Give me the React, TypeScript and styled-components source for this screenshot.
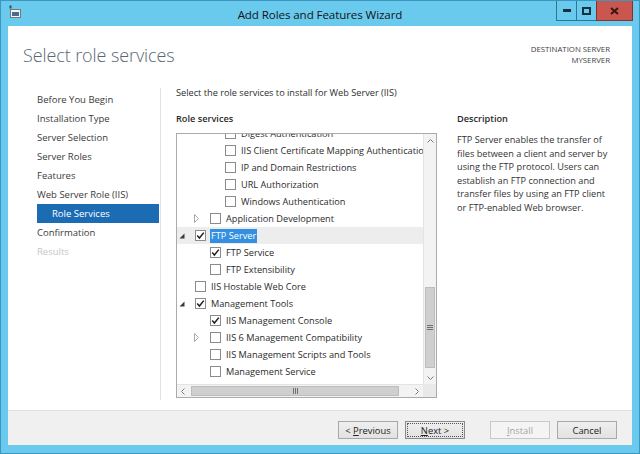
import styled, { createGlobalStyle } from "styled-components";

const GlobalStyle = createGlobalStyle`
    html, body {
        margin: 0;
        padding: 0;
    }
    body {
        font-family: "Open Sans", "Noto Sans", sans-serif;
        color: #2b2b2b;
    }
`;

type Expander = "none" | "open" | "closed";

interface TreeItem {
    label: string;
    level: number;
    checked?: boolean;
    expander?: Expander;
    selected?: boolean;
}

const navItems = [
    { label: "Before You Begin" },
    { label: "Installation Type" },
    { label: "Server Selection" },
    { label: "Server Roles" },
    { label: "Features" },
    { label: "Web Server Role (IIS)" },
    { label: "Role Services", active: true, sub: true },
    { label: "Confirmation" },
    { label: "Results", disabled: true },
];

const treeItems: TreeItem[] = [
    { label: "Digest Authentication", level: 3 },
    { label: "IIS Client Certificate Mapping Authentication", level: 3 },
    { label: "IP and Domain Restrictions", level: 3 },
    { label: "URL Authorization", level: 3 },
    { label: "Windows Authentication", level: 3 },
    { label: "Application Development", level: 2, expander: "closed" },
    { label: "FTP Server", level: 1, expander: "open", checked: true, selected: true },
    { label: "FTP Service", level: 2, checked: true },
    { label: "FTP Extensibility", level: 2 },
    { label: "IIS Hostable Web Core", level: 1 },
    { label: "Management Tools", level: 1, expander: "open", checked: true },
    { label: "IIS Management Console", level: 2, checked: true },
    { label: "IIS 6 Management Compatibility", level: 2, expander: "closed" },
    { label: "IIS Management Scripts and Tools", level: 2 },
    { label: "Management Service", level: 2 },
];

const App = () => {
    return (
        <>
            <GlobalStyle />
            <Window>
                <TitleBar>
                    <AppIcon width="12" height="14" viewBox="0 0 12 14">
                        <rect x="0.5" y="0.5" width="2" height="3" fill="#3b4a5a" />
                        <rect x="1.5" y="4.5" width="10" height="8" fill="#f4f4f4" stroke="#6c7a86" />
                        <rect x="3" y="7" width="7" height="4" fill="#4a6c8c" />
                    </AppIcon>
                    <Title>Add Roles and Features Wizard</Title>
                    <Controls>
                        <CtrlButton>
                            <svg width="8" height="3" viewBox="0 0 8 3">
                                <rect width="8" height="3" fill="#17323f" />
                            </svg>
                        </CtrlButton>
                        <CtrlButton>
                            <svg width="9" height="8" viewBox="0 0 9 8">
                                <rect x="1" y="1" width="7" height="6" fill="none" stroke="#17323f" strokeWidth="2" />
                            </svg>
                        </CtrlButton>
                        <CloseButton>
                            <svg width="9" height="8" viewBox="0 0 9 8">
                                <path d="M1 1 L8 7 M8 1 L1 7" stroke="#3a1512" strokeWidth="2" />
                            </svg>
                        </CloseButton>
                    </Controls>
                </TitleBar>

                <Client>
                    <Header>
                        <Heading>Select role services</Heading>
                        <Destination>
                            <div>DESTINATION SERVER</div>
                            <div>MYSERVER</div>
                        </Destination>
                    </Header>

                    <Body>
                        <Nav>
                            {navItems.map((item) => (
                                <NavItem
                                    key={item.label}
                                    $active={item.active}
                                    $sub={item.sub}
                                    $disabled={item.disabled}
                                >
                                    {item.label}
                                </NavItem>
                            ))}
                        </Nav>

                        <Main>
                            <Intro>Select the role services to install for Web Server (IIS)</Intro>
                            <Columns>
                                <TreeColumn>
                                    <SectionLabel>Role services</SectionLabel>
                                    <TreeBox>
                                        <TreeViewport>
                                            <TreeList>
                                                {treeItems.map((item) => (
                                                    <TreeRow
                                                        key={item.label}
                                                        $level={item.level}
                                                        $hover={item.selected}
                                                    >
                                                        <ExpanderSlot>
                                                            {item.expander === "open" && (
                                                                <svg width="6" height="6" viewBox="0 0 6 6">
                                                                    <polygon points="5.5,0.5 5.5,5.5 0.5,5.5" fill="#3a3a3a" />
                                                                </svg>
                                                            )}
                                                            {item.expander === "closed" && (
                                                                <svg width="6" height="9" viewBox="0 0 6 9">
                                                                    <polygon points="0.5,0.5 4.5,4.5 0.5,8.5" fill="none" stroke="#a8a8a8" />
                                                                </svg>
                                                            )}
                                                        </ExpanderSlot>
                                                        <CheckBox>
                                                            {item.checked && (
                                                                <svg width="9" height="9" viewBox="0 0 9 9">
                                                                    <path d="M1.2 4.6 L3.4 7 L7.8 1.6" fill="none" stroke="#1f1f1f" strokeWidth="1.5" />
                                                                </svg>
                                                            )}
                                                        </CheckBox>
                                                        <RowText $selected={item.selected}>{item.label}</RowText>
                                                    </TreeRow>
                                                ))}
                                            </TreeList>
                                        </TreeViewport>

                                        <VScroll>
                                            <ArrowCell>
                                                <svg width="7" height="4" viewBox="0 0 7 4">
                                                    <polyline points="0.5,3.5 3.5,0.5 6.5,3.5" fill="none" stroke="#7a7a7a" />
                                                </svg>
                                            </ArrowCell>
                                            <VTrack>
                                                <VThumb $offset={140}>
                                                    <svg width="6" height="5" viewBox="0 0 6 5">
                                                        <path d="M0 0.5 H6 M0 2.5 H6 M0 4.5 H6" stroke="#6f6f6f" />
                                                    </svg>
                                                </VThumb>
                                            </VTrack>
                                            <ArrowCell>
                                                <svg width="7" height="4" viewBox="0 0 7 4">
                                                    <polyline points="0.5,0.5 3.5,3.5 6.5,0.5" fill="none" stroke="#7a7a7a" />
                                                </svg>
                                            </ArrowCell>
                                        </VScroll>

                                        <HScroll>
                                            <ArrowCell>
                                                <svg width="4" height="7" viewBox="0 0 4 7">
                                                    <polyline points="3.5,0.5 0.5,3.5 3.5,6.5" fill="none" stroke="#7a7a7a" />
                                                </svg>
                                            </ArrowCell>
                                            <HTrack>
                                                <HThumb>
                                                    <svg width="5" height="6" viewBox="0 0 5 6">
                                                        <path d="M0.5 0 V6 M2.5 0 V6 M4.5 0 V6" stroke="#6f6f6f" />
                                                    </svg>
                                                </HThumb>
                                            </HTrack>
                                            <ArrowCell>
                                                <svg width="4" height="7" viewBox="0 0 4 7">
                                                    <polyline points="0.5,0.5 3.5,3.5 0.5,6.5" fill="none" stroke="#7a7a7a" />
                                                </svg>
                                            </ArrowCell>
                                        </HScroll>
                                        <Corner />
                                    </TreeBox>
                                </TreeColumn>

                                <DescColumn>
                                    <SectionLabel>Description</SectionLabel>
                                    <DescText>
                                        FTP Server enables the transfer of files between a client and server by
                                        using the FTP protocol. Users can establish an FTP connection and
                                        transfer files by using an FTP client or FTP-enabled Web browser.
                                    </DescText>
                                </DescColumn>
                            </Columns>
                        </Main>
                    </Body>

                    <Footer>
                        <Button>
                            <span>
                                &lt; <u>P</u>revious
                            </span>
                        </Button>
                        <Button $focused>
                            <FocusRing>
                                <span>
                                    <u>N</u>ext &gt;
                                </span>
                            </FocusRing>
                        </Button>
                        <Button $disabled $gap={25}>
                            <span>
                                <u>I</u>nstall
                            </span>
                        </Button>
                        <Button>Cancel</Button>
                    </Footer>
                </Client>
            </Window>
        </>
    );
};

const Window = styled.div`
    width: 640px;
    height: 454px;
    box-sizing: border-box;
    background: #6acaee;
    border: 1px solid #3b97c0;
    padding: 0 7px 8px 7px;
    display: flex;
    flex-direction: column;
`;

const TitleBar = styled.div`
    height: 25px;
    flex-shrink: 0;
    display: grid;
    grid-template-columns: 1fr auto 1fr;
    align-items: center;
`;

const AppIcon = styled.svg`
    justify-self: start;
    margin-left: 1px;
    margin-top: -3px;
`;

const Title = styled.div`
    font-size: 11.6px;
    color: #141414;
    letter-spacing: -0.1px;
    padding-top: 1px;
`;

const Controls = styled.div`
    justify-self: end;
    align-self: start;
    display: flex;
    margin-right: -1px;
`;

const CtrlButton = styled.div`
    width: 21px;
    height: 20px;
    box-sizing: border-box;
    border: 1px solid #2f7594;
    border-top: none;
    margin-left: -1px;
    display: flex;
    align-items: center;
    justify-content: center;
    background: #6acaee;
`;

const CloseButton = styled(CtrlButton)`
    width: 37px;
    background: #c9574f;
    border-color: #8a2f2a;
`;

const Client = styled.div`
    flex: 1;
    background: #ffffff;
    display: flex;
    flex-direction: column;
    min-height: 0;
`;

const Header = styled.div`
    height: 60px;
    flex-shrink: 0;
    display: flex;
    justify-content: space-between;
    padding: 0 22px 0 15px;
`;

const Heading = styled.h1`
    margin: 0;
    padding-top: 17px;
    font-size: 18px;
    line-height: 24px;
    font-weight: 300;
    color: #5a6773;
    letter-spacing: -0.1px;
`;

const Destination = styled.div`
    padding-top: 18px;
    text-align: right;
    font-size: 7.8px;
    line-height: 11px;
    color: #3e3e3e;
`;

const Body = styled.div`
    flex: 1;
    display: flex;
    min-height: 0;
`;

const Nav = styled.nav`
    width: 153px;
    box-sizing: border-box;
    padding: 2px 1px 0 29px;
    margin: 2px 0 10px;
    border-right: 1px solid #e2e2e2;
`;

const NavItem = styled.div<{ $active?: boolean; $sub?: boolean; $disabled?: boolean }>`
    height: 19px;
    line-height: 19px;
    font-size: 9.5px;
    padding-left: ${(p) => (p.$sub ? "15px" : "0")};
    background: ${(p) => (p.$active ? "#1c6cb4" : "transparent")};
    color: ${(p) => (p.$active ? "#ffffff" : p.$disabled ? "#c6c6c6" : "#3a3a3a")};
    white-space: nowrap;
`;

const Main = styled.div`
    flex: 1;
    padding-left: 15px;
    display: flex;
    flex-direction: column;
    font-size: 9.2px;
`;

const Intro = styled.div`
    height: 14px;
    line-height: 14px;
    color: #2e2e2e;
`;

const Columns = styled.div`
    margin-top: 12px;
    display: flex;
    gap: 20px;
`;

const TreeColumn = styled.div`
    width: 261px;
    display: flex;
    flex-direction: column;
`;

const SectionLabel = styled.div`
    height: 14px;
    line-height: 14px;
    font-weight: 600;
    color: #2b2b2b;
    margin-bottom: 7px;
`;

const TreeBox = styled.div`
    height: 265px;
    box-sizing: border-box;
    border: 1px solid #a9abb0;
    display: grid;
    grid-template-columns: 1fr 13px;
    grid-template-rows: 1fr 13px;
`;

const TreeViewport = styled.div`
    overflow: hidden;
    min-width: 0;
`;

const TreeList = styled.div`
    margin-top: -9px;
`;

const TreeRow = styled.div<{ $level: number; $hover?: boolean }>`
    height: 17px;
    display: flex;
    align-items: center;
    padding-left: ${(p) => (p.$level - 1) * 15}px;
    background: ${(p) => (p.$hover ? "#ededed" : "transparent")};
    white-space: nowrap;
`;

const ExpanderSlot = styled.div`
    width: 18px;
    flex-shrink: 0;
    display: flex;
    align-items: center;
    padding-left: 2px;
    box-sizing: border-box;
`;

const CheckBox = styled.div`
    width: 11px;
    height: 11px;
    box-sizing: border-box;
    flex-shrink: 0;
    border: 1px solid #8b8b8b;
    background: #ffffff;
    margin-right: 5px;
    display: flex;
    align-items: center;
    justify-content: center;
`;

const RowText = styled.span<{ $selected?: boolean }>`
    height: 14px;
    line-height: 14px;
    padding: 0 1px;
    margin-left: -1px;
    background: ${(p) => (p.$selected ? "#3390e0" : "transparent")};
    color: ${(p) => (p.$selected ? "#ffffff" : "#2b2b2b")};
`;

const VScroll = styled.div`
    display: flex;
    flex-direction: column;
    background: #f3f3f3;
    border-left: 1px solid #e4e4e4;
`;

const ArrowCell = styled.div`
    width: 12px;
    height: 13px;
    flex-shrink: 0;
    display: flex;
    align-items: center;
    justify-content: center;
`;

const VTrack = styled.div`
    flex: 1;
`;

const VThumb = styled.div<{ $offset: number }>`
    margin-top: ${(p) => p.$offset}px;
    height: 81px;
    margin-left: 1px;
    width: 10px;
    box-sizing: border-box;
    background: #cfcfcf;
    border: 1px solid #bdbdbd;
    display: flex;
    align-items: center;
    justify-content: center;
`;

const HScroll = styled.div`
    display: flex;
    background: #f3f3f3;
    border-top: 1px solid #e4e4e4;
`;

const HTrack = styled.div`
    flex: 1;
    padding: 1px 12px 1px 2px;
    display: flex;
`;

const HThumb = styled.div`
    flex: 1;
    box-sizing: border-box;
    background: #cfcfcf;
    border: 1px solid #bdbdbd;
    display: flex;
    align-items: center;
    justify-content: center;
`;

const Corner = styled.div`
    background: #e9e9e9;
`;

const DescColumn = styled.div`
    width: 158px;
    display: flex;
    flex-direction: column;
`;

const DescText = styled.p`
    margin: 0;
    line-height: 13.5px;
    color: #333333;
`;

const Footer = styled.div`
    height: 35px;
    box-sizing: border-box;
    flex-shrink: 0;
    border-top: 1px solid #dedede;
    background: #f0f0f0;
    display: flex;
    justify-content: flex-end;
    align-items: flex-start;
    padding: 10px 15px 0 0;
`;

const Button = styled.div<{ $focused?: boolean; $disabled?: boolean; $gap?: number }>`
    width: 60px;
    height: 18px;
    box-sizing: border-box;
    margin-left: ${(p) => p.$gap ?? 7}px;
    border: 1px solid ${(p) => (p.$disabled ? "#c9c9c9" : p.$focused ? "#8a8a8a" : "#a8a8a8")};
    background: ${(p) => (p.$disabled ? "#f4f4f4" : "linear-gradient(#efefef, #e2e2e2)")};
    color: ${(p) => (p.$disabled ? "#a6a6a6" : "#222222")};
    font-size: 9.4px;
    display: flex;
    align-items: center;
    justify-content: center;
    padding: 1px;
    white-space: pre;
`;

const FocusRing = styled.span`
    flex: 1;
    align-self: stretch;
    display: flex;
    align-items: center;
    justify-content: center;
    outline: 1px dotted #555;
    outline-offset: -1px;
`;

export default App;
